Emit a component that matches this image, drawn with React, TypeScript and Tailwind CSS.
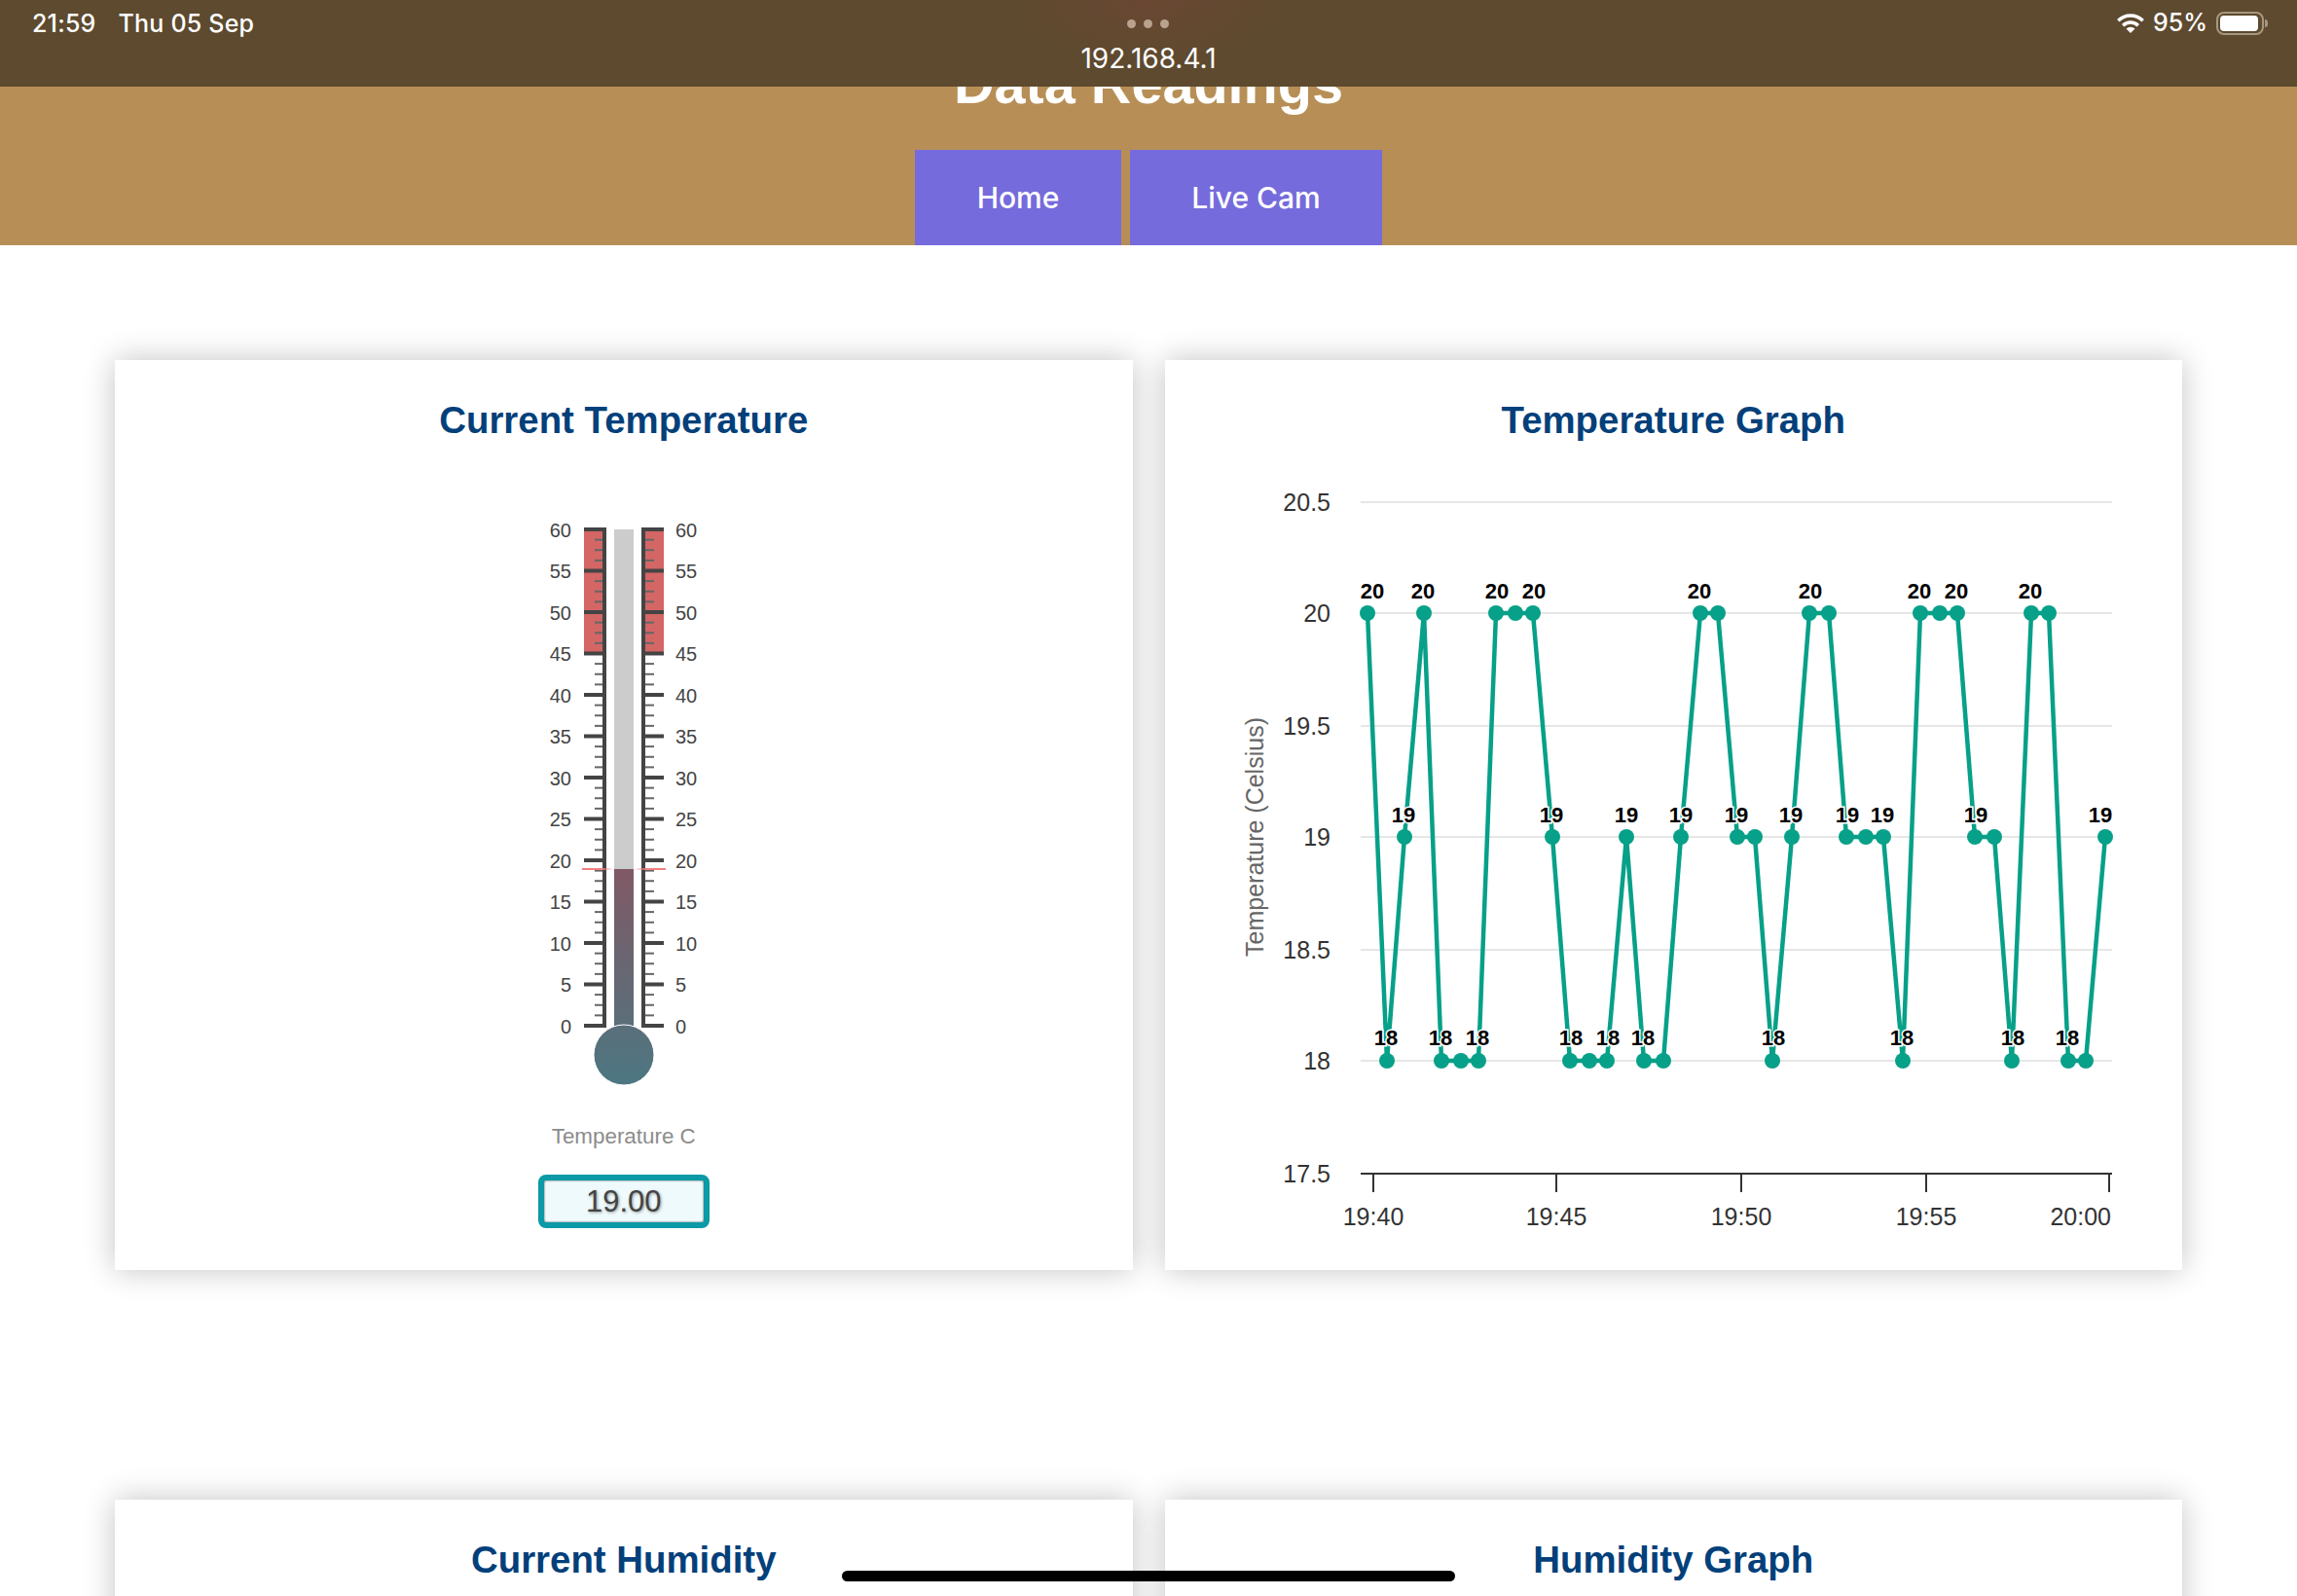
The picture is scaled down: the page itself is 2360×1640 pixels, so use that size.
// App.tsx
//
// Sensor dashboard as seen in iPad Safari: status bar over a scrolled page,
// temperature gauge and graph cards, and the tops of the humidity cards.

const SERIES: number[][] = [
  [1405, 20], [1425, 18], [1443, 19], [1463, 20], [1481, 18], [1501, 18], [1519, 18],
  [1537, 20], [1557, 20], [1575, 20], [1595, 19], [1613, 18], [1633, 18], [1651, 18],
  [1671, 19], [1689, 18], [1709, 18], [1727, 19], [1747, 20], [1765, 20], [1785, 19],
  [1803, 19], [1821, 18], [1841, 19], [1859, 20], [1879, 20], [1897, 19], [1917, 19],
  [1935, 19], [1955, 18], [1973, 20], [1993, 20], [2011, 20], [2029, 19], [2049, 19],
  [2067, 18], [2087, 20], [2105, 20], [2125, 18], [2143, 18], [2163, 19],
];

const LABELS: { value: number; y: number; xs: number[] }[] = [
  { value: 20, y: 608, xs: [1410, 1462, 1538, 1576, 1746, 1860, 1972, 2010, 2086] },
  { value: 19, y: 838, xs: [1442, 1594, 1671, 1727, 1784, 1840, 1898, 1934, 2030, 2158] },
  { value: 18, y: 1067, xs: [1424, 1480, 1518, 1614, 1652, 1688, 1822, 1954, 2068, 2124] },
];

const Y_TICKS = [
  { label: "20.5", y: 516 },
  { label: "20", y: 630 },
  { label: "19.5", y: 746 },
  { label: "19", y: 860 },
  { label: "18.5", y: 976 },
  { label: "18", y: 1090 },
];

const X_TICKS = [
  { label: "19:40", x: 1411 },
  { label: "19:45", x: 1599 },
  { label: "19:50", x: 1789 },
  { label: "19:55", x: 1979 },
];

function valueToY(value: number): number {
  return 1090 - (value - 18) * 230;
}

function Thermometer() {
  const degreeToY = (d: number) => 1054 - d * 8.5;
  // Scale steps are 1.25 degrees: a labelled tick every 5, three small ones between
  const steps = Array.from({ length: 49 }, (_, i) => i * 1.25);

  return (
    <svg width="160" height="600" viewBox="561 530 160 600" className="block">
      <defs>
        <linearGradient id="mercury" gradientUnits="userSpaceOnUse" x1="0" y1="893" x2="0" y2="1115">
          <stop offset="0" stopColor="#805965" />
          <stop offset="1" stopColor="#4c7782" />
        </linearGradient>
        <linearGradient id="markLeft" gradientUnits="userSpaceOnUse" x1="598" y1="0" x2="630" y2="0">
          <stop offset="0.6" stopColor="#f08080" />
          <stop offset="1" stopColor="#f08080" stopOpacity="0" />
        </linearGradient>
        <linearGradient id="markRight" gradientUnits="userSpaceOnUse" x1="684" y1="0" x2="652" y2="0">
          <stop offset="0.6" stopColor="#f08080" />
          <stop offset="1" stopColor="#f08080" stopOpacity="0" />
        </linearGradient>
      </defs>

      {/* Warning band, 45 to 60 */}
      <rect x="600" y="544" width="19" height="128" fill="#d46666" />
      <rect x="663" y="544" width="19" height="128" fill="#d46666" />

      {/* Tube and bulb */}
      <rect x="631" y="544" width="20" height="510" fill="#cccccc" />
      <rect x="631" y="893" width="20" height="161" fill="url(#mercury)" />
      <circle cx="641" cy="1084" r="31" fill="url(#mercury)" stroke="#ffffff" strokeWidth="1" />

      {/* Scale */}
      <line x1="621" y1="542" x2="621" y2="1056" stroke="#444444" strokeWidth="4" />
      <line x1="661" y1="542" x2="661" y2="1056" stroke="#444444" strokeWidth="4" />
      {steps.map((d) => {
        const y = degreeToY(d);
        const major = d % 5 === 0;
        return (
          <g key={d} stroke={major ? "#444444" : "#666666"} strokeWidth={major ? 4 : 2}>
            <line x1={major ? 600 : 611} y1={y} x2="619" y2={y} />
            <line x1="663" y1={y} x2={major ? 682 : 672} y2={y} />
          </g>
        );
      })}
      {steps
        .filter((d) => d % 5 === 0)
        .map((d) => (
          <g key={d} fill="#444444" fontSize="20" fontFamily="'Liberation Sans', sans-serif">
            <text x="587" y={degreeToY(d) + 7.5} textAnchor="end">{d}</text>
            <text x="694" y={degreeToY(d) + 7.5}>{d}</text>
          </g>
        ))}

      {/* Current value marker */}
      <rect x="598" y="892" width="32" height="2" fill="url(#markLeft)" />
      <rect x="652" y="892" width="32" height="2" fill="url(#markRight)" />
    </svg>
  );
}

function TemperatureChart() {
  const points = SERIES.map(([x, v]) => `${x},${valueToY(v)}`).join(" ");

  return (
    <svg width="1046" height="800" viewBox="1196 490 1046 800" className="block">
      <g fontFamily="'Liberation Sans', sans-serif" fontSize="25" fill="#333333">
        {Y_TICKS.map((t) => (
          <g key={t.label}>
            <line x1="1398" y1={t.y} x2="2170" y2={t.y} stroke="#e6e6e6" strokeWidth="2" />
            <text x="1367" y={t.y + 9} textAnchor="end">{t.label}</text>
          </g>
        ))}
        <text x="1367" y="1215" textAnchor="end">17.5</text>

        {/* Time axis */}
        <line x1="1398" y1="1206" x2="2170" y2="1206" stroke="#333333" strokeWidth="2" />
        {X_TICKS.map((t) => (
          <g key={t.label}>
            <line x1={t.x} y1="1206" x2={t.x} y2="1225" stroke="#333333" strokeWidth="2" />
            <text x={t.x} y="1259" textAnchor="middle">{t.label}</text>
          </g>
        ))}
        <line x1="2167" y1="1206" x2="2167" y2="1225" stroke="#333333" strokeWidth="2" />
        <text x="2169" y="1259" textAnchor="end">20:00</text>

        <text
          x="0"
          y="0"
          fill="#666666"
          textAnchor="middle"
          transform="translate(1298 860) rotate(-90)"
        >
          Temperature (Celsius)
        </text>
      </g>

      <polyline points={points} fill="none" stroke="#07a088" strokeWidth="4.5" strokeLinejoin="round" />
      {SERIES.map(([x, v]) => (
        <circle key={x} cx={x} cy={valueToY(v)} r="8" fill="#07a088" />
      ))}

      <g
        fontFamily="'Liberation Sans', sans-serif"
        fontSize="22"
        fontWeight="700"
        fill="#000000"
        stroke="#ffffff"
        strokeWidth="3"
        textAnchor="middle"
        style={{ paintOrder: "stroke" }}
      >
        {LABELS.map((row) =>
          row.xs.map((x) => (
            <text key={`${row.value}-${x}`} x={x} y={row.y + 7}>{row.value}</text>
          )),
        )}
      </g>
    </svg>
  );
}

function Card({ title, children }: { title: string; children?: React.ReactNode }) {
  return (
    <section className="flex h-[935px] flex-col items-center bg-white pt-[40px] shadow-[0_0_30px_rgba(0,0,0,0.24)]">
      <h2 className="text-[38.4px] leading-[44px] font-bold text-[#03407a]">{title}</h2>
      {children}
    </section>
  );
}

function WifiIcon() {
  return (
    <svg width="28" height="20" viewBox="0 0 28 20" fill="none" stroke="#ffffff" strokeWidth="3.5">
      <path d="M1.3 7.3A18 18 0 0 1 26.7 7.3" />
      <path d="M6.2 12.2A11 11 0 0 1 21.8 12.2" />
      <path d="M14 20L9.5 15.5A6.4 6.4 0 0 1 18.5 15.5Z" fill="#ffffff" stroke="none" />
    </svg>
  );
}

function StatusBar() {
  return (
    <div className="absolute inset-x-0 top-0 grid h-[89px] grid-cols-[1fr_auto_1fr] bg-[radial-gradient(ellipse_150px_70px_at_50%_0%,#6a4732,#5d4a2f)] font-['Inter',sans-serif] text-white">
      <div className="flex h-[50px] items-center gap-[23px] pl-[33px] text-[25px] font-medium tracking-[0.2px]">
        <span>21:59</span>
        <span>Thu 05 Sep</span>
      </div>
      <div className="flex flex-col items-center">
        <div className="flex h-[48px] items-center gap-[8px]">
          <span className="size-[9px] rounded-full bg-[#b9a28e]" />
          <span className="size-[9px] rounded-full bg-[#b9a28e]" />
          <span className="size-[9px] rounded-full bg-[#b9a28e]" />
        </div>
        <span className="text-[28px] leading-[24px]">192.168.4.1</span>
      </div>
      <div className="flex h-[48px] items-center justify-end gap-[9px] pr-[30px]">
        <WifiIcon />
        <span className="text-[25px] font-medium">95%</span>
        <div className="flex items-center gap-[1px]">
          <div className="flex h-[24px] w-[49px] items-center rounded-[8px] border-2 border-[#a5977f] px-[2px]">
            <div className="h-[16px] w-[39px] rounded-[4px] bg-white" />
          </div>
          <div className="h-[8px] w-[3px] rounded-r-full bg-[#a5977f]" />
        </div>
      </div>
    </div>
  );
}

export default function App() {
  return (
    <div className="relative h-[1640px] overflow-hidden bg-white font-['Liberation_Sans',sans-serif]">
      {/* Page header, its title scrolled mostly under the status bar */}
      <header className="flex h-[252px] flex-col items-center justify-end bg-[#b78f56]">
        <h1 className="mb-[35px] text-[57.6px] leading-[66px] font-bold text-white">Data Readings</h1>
        <nav className="flex gap-[9px] font-['Inter',sans-serif] text-[30px] font-medium text-white">
          <a className="flex h-[98px] w-[212px] items-center justify-center bg-[#766bdc]">Home</a>
          <a className="flex h-[98px] w-[259px] items-center justify-center bg-[#766bdc]">Live Cam</a>
        </nav>
      </header>

      <main className="grid grid-cols-2 gap-x-[33px] gap-y-[236px] px-[118px] pt-[118px]">
        <Card title="Current Temperature">
          <div className="mt-[76px]">
            <Thermometer />
          </div>
          <p className="mt-[25px] text-[22.4px] leading-[26px] text-[#8c8c8c]">Temperature C</p>
          <div className="mt-[26px] flex h-[55px] w-[176px] items-center justify-center rounded-lg border-[6px] border-[#0b9aa6] bg-[#effafc] pt-[1px] text-[31px] text-[#444444] shadow-[inset_0_0_2px_#333333] [text-shadow:1px_1px_3px_rgba(0,0,0,0.4)]">
            19.00
          </div>
        </Card>
        <Card title="Temperature Graph">
          <div className="mt-[36px]">
            <TemperatureChart />
          </div>
        </Card>
        <Card title="Current Humidity" />
        <Card title="Humidity Graph" />
      </main>

      <StatusBar />

      {/* Home indicator */}
      <div className="absolute bottom-[15px] left-[865px] h-[11px] w-[630px] rounded-full bg-black" />
    </div>
  );
}
